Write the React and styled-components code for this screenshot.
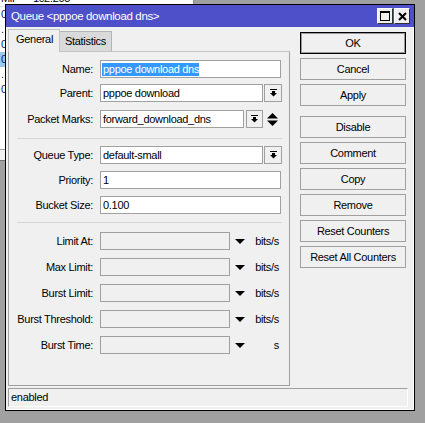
import React from 'react';
import styled, { createGlobalStyle } from 'styled-components';

const GlobalStyle = createGlobalStyle`
    html, body {
        margin: 0;
        padding: 0;
        background: #a0a0a0;
    }
    body {
        font-family: "Liberation Sans", Arial, sans-serif;
        font-size: 11px;
        letter-spacing: -0.3px;
        color: #000;
    }
`

const Desktop = styled.div`
    position: relative;
    width: 425px;
    height: 423px;
    overflow: hidden;
    background: #a0a0a0;
`

// window behind the dialog, only its corner shows
const BackWindow = styled.div`
    position: absolute;
    left: 0;
    top: 0;
    width: 193px;
    height: 161px;
    background: #fff;
    border-right: 1px solid #8a8a8a;
    display: flex;
    flex-direction: column;
`
const BackHeader = styled.div`
    height: 6px;
    overflow: hidden;
    border-bottom: 1px solid #e0e0e0;
    display: flex;
    gap: 14px;
    padding-left: 1px;
    line-height: 1;
    & span { margin-top: -7px; }
`
const BackRow = styled.div`
    height: 15px;
    line-height: 15px;
    padding-left: 1px;
    color: #0a246a;
    background: ${p => (p.$selected ? '#99c9ef' : 'transparent')};
`
const BackFill = styled.div`
    flex: 1;
`
const BackStatus = styled.div`
    height: 10px;
    background: #f0f0f0;
    border-top: 1px solid #a0a0a0;
    border-bottom: 1px solid #707070;
`

const Dialog = styled.div`
    position: absolute;
    left: 5px;
    top: 4px;
    width: 410px;
    height: 407px;
    box-sizing: border-box;
    border: 1px solid #000;
    background: #f0f0f0;
    box-shadow: inset -1px -1px 0 #fff;
    display: flex;
    flex-direction: column;
`
const TitleBar = styled.div`
    height: 22px;
    flex: none;
    background: #4e50c9;
    display: flex;
    align-items: center;
    justify-content: space-between;
    padding: 0 4px 0 5px;
`
const Title = styled.span`
    color: #fff;
    font-size: 11.5px;
    letter-spacing: -0.35px;
`
const TitleButtons = styled.div`
    display: flex;
    gap: 1px;
`
const TitleBtn = styled.div`
    width: 16px;
    height: 16px;
    box-sizing: border-box;
    background: #f0f0f0;
    border: 1px solid;
    border-color: #fff #303030 #303030 #fff;
    display: flex;
    align-items: center;
    justify-content: center;
`

const Content = styled.div`
    display: flex;
    padding: 2px 7px 0 2px;
    gap: 10px;
`
const LeftCol = styled.div`
    width: 282px;
    display: flex;
    flex-direction: column;
`
const TabStrip = styled.div`
    height: 22px;
    display: flex;
    align-items: flex-end;
`
const Tab = styled.div`
    position: relative;
    z-index: 1;
    box-sizing: border-box;
    width: 52px;
    height: ${p => (p.$active ? '23px' : '20px')};
    margin-bottom: ${p => (p.$active ? '-1px' : '0')};
    padding-left: ${p => (p.$active ? '7px' : '5px')};
    background: ${p => (p.$active ? '#f0f0f0' : '#dadada')};
    border: 1px solid ${p => (p.$active ? '#c4c4c4' : '#b4b4b4')};
    border-bottom: none;
    border-left: ${p => (p.$active ? '1px solid #c4c4c4' : 'none')};
    line-height: ${p => (p.$active ? '19px' : '18px')};
`
const Panel = styled.div`
    height: 335px;
    box-sizing: border-box;
    border: 1px solid #a0a0a0;
    border-top-color: #c4c4c4;
    padding-top: 8px;
    display: flex;
    flex-direction: column;
`
const FormRow = styled.div`
    display: flex;
    align-items: center;
    height: 18px;
    margin-top: ${p => p.$gap || 0}px;
`
const Label = styled.div`
    width: 84px;
    flex: none;
    margin-right: 7px;
    text-align: right;
    white-space: nowrap;
`
const Field = styled.div`
    width: ${p => p.$width}px;
    height: 18px;
    flex: none;
    box-sizing: border-box;
    border: 1px solid #a0a0a0;
    background: ${p => (p.$disabled ? '#f0f0f0' : '#fff')};
    padding-left: 1px;
    line-height: 16px;
    white-space: nowrap;
    overflow: hidden;
`
const Selected = styled.span`
    display: inline-block;
    line-height: 13px;
    padding-left: 1px;
    background: #3399ff;
    color: #fff;
`
const FieldText = styled.span`
    padding-left: 1px;
`
const DropBtn = styled.div`
    width: ${p => p.$width || 18}px;
    height: 18px;
    flex: none;
    box-sizing: border-box;
    margin-left: ${p => p.$gap || 1}px;
    border: 1px solid #a0a0a0;
    background: #f0f0f0;
    display: flex;
    align-items: center;
    justify-content: center;
`
const SpinIcon = styled.div`
    margin-left: 4px;
    display: flex;
    align-items: center;
`
const Separator = styled.div`
    border-top: 1px solid #d6d6d6;
    margin: ${p => p.$top}px 7px ${p => p.$bottom}px 8px;
`
const ArrowSlot = styled.div`
    margin-left: 5px;
    display: flex;
    align-items: center;
`
const Unit = styled.div`
    flex: 1;
    text-align: right;
    padding-right: 10px;
`

const ButtonCol = styled.div`
    width: 106px;
    padding-top: 3px;
    display: flex;
    flex-direction: column;
    gap: 4px;
`
const Button = styled.div`
    height: 22px;
    box-sizing: border-box;
    border: 1px solid ${p => (p.$default ? '#000' : '#a0a0a0')};
    box-shadow: ${p => (p.$default ? 'inset 0 0 0 1px #9a9a9a' : 'none')};
    background: #f0f0f0;
    margin-top: ${p => (p.$groupStart ? '6px' : '0')};
    display: flex;
    align-items: center;
    justify-content: center;
    font-size: 11px;
`

const StatusBar = styled.div`
    width: 400px;
    height: 19px;
    box-sizing: border-box;
    margin: 2px 0 0 2px;
    border: 1px solid;
    border-color: #a0a0a0 #fff #fff #a0a0a0;
    padding-left: 2px;
    line-height: 17px;
`

const DropIcon = () => (
    <svg width="9" height="9" viewBox="0 0 9 9">
        <rect x="1" y="0" width="7" height="1" fill="#000" />
        <rect x="3" y="2" width="3" height="2" fill="#000" />
        <polygon points="1,4 8,4 4.5,7.5" fill="#000" />
    </svg>
)

const UpDownIcon = () => (
    <svg width="11" height="13" viewBox="0 0 11 13">
        <polygon points="0,5.5 11,5.5 5.5,0" fill="#000" />
        <polygon points="0,7.5 11,7.5 5.5,13" fill="#000" />
    </svg>
)

const DownArrow = () => (
    <svg width="10" height="5" viewBox="0 0 10 5">
        <polygon points="0,0 10,0 5,5" fill="#000" />
    </svg>
)

const MaxIcon = () => (
    <svg width="10" height="10" viewBox="0 0 10 10">
        <rect x="0.5" y="0.5" width="9" height="9" fill="none" stroke="#000" />
        <rect x="0" y="0" width="10" height="2" fill="#000" />
    </svg>
)

const CloseIcon = () => (
    <svg width="9" height="9" viewBox="0 0 9 9">
        <path d="M1 1 L8 8 M8 1 L1 8" stroke="#000" strokeWidth="2" />
    </svg>
)

const rateRows = [
    { label: 'Limit At:', unit: 'bits/s' },
    { label: 'Max Limit:', unit: 'bits/s' },
    { label: 'Burst Limit:', unit: 'bits/s' },
    { label: 'Burst Threshold:', unit: 'bits/s' },
    { label: 'Burst Time:', unit: 's' },
]

const buttons = [
    { text: 'OK', isDefault: true },
    { text: 'Cancel' },
    { text: 'Apply' },
    { text: 'Disable', groupStart: true },
    { text: 'Comment' },
    { text: 'Copy' },
    { text: 'Remove' },
    { text: 'Reset Counters' },
    { text: 'Reset All Counters' },
]

const backRows = ['0', '.', '0', '0', '.', '0']

const App = () => {
    return (
        <Desktop>
            <GlobalStyle />
            <BackWindow>
                <BackHeader>
                    <span>MiP</span>
                    <span>1c2.205</span>
                </BackHeader>
                {backRows.map((r, i) => (
                    <BackRow key={i} $selected={i === 3}>{r}</BackRow>
                ))}
                <BackFill />
                <BackStatus />
            </BackWindow>

            <Dialog>
                <TitleBar>
                    <Title>Queue &lt;pppoe download dns&gt;</Title>
                    <TitleButtons>
                        <TitleBtn><MaxIcon /></TitleBtn>
                        <TitleBtn><CloseIcon /></TitleBtn>
                    </TitleButtons>
                </TitleBar>

                <Content>
                    <LeftCol>
                        <TabStrip>
                            <Tab $active>General</Tab>
                            <Tab>Statistics</Tab>
                        </TabStrip>
                        <Panel>
                            <FormRow>
                                <Label>Name:</Label>
                                <Field $width={181}><Selected>pppoe download dns</Selected></Field>
                            </FormRow>
                            <FormRow $gap={6}>
                                <Label>Parent:</Label>
                                <Field $width={163}><FieldText>pppoe download</FieldText></Field>
                                <DropBtn><DropIcon /></DropBtn>
                            </FormRow>
                            <FormRow $gap={8}>
                                <Label>Packet Marks:</Label>
                                <Field $width={144}><FieldText>forward_download_dns</FieldText></Field>
                                <DropBtn $width={17} $gap={2}><DropIcon /></DropBtn>
                                <SpinIcon><UpDownIcon /></SpinIcon>
                            </FormRow>
                            <Separator $top={10} $bottom={7} />
                            <FormRow>
                                <Label>Queue Type:</Label>
                                <Field $width={163}><FieldText>default-small</FieldText></Field>
                                <DropBtn><DropIcon /></DropBtn>
                            </FormRow>
                            <FormRow $gap={7}>
                                <Label>Priority:</Label>
                                <Field $width={181}><FieldText>1</FieldText></Field>
                            </FormRow>
                            <FormRow $gap={7}>
                                <Label>Bucket Size:</Label>
                                <Field $width={181}><FieldText>0.100</FieldText></Field>
                            </FormRow>
                            <Separator $top={8} $bottom={9} />
                            {rateRows.map((r, i) => (
                                <FormRow key={r.label} $gap={i === 0 ? 0 : 8}>
                                    <Label>{r.label}</Label>
                                    <Field $width={130} $disabled />
                                    <ArrowSlot><DownArrow /></ArrowSlot>
                                    <Unit>{r.unit}</Unit>
                                </FormRow>
                            ))}
                        </Panel>
                    </LeftCol>

                    <ButtonCol>
                        {buttons.map(b => (
                            <Button key={b.text} $default={b.isDefault} $groupStart={b.groupStart}>
                                {b.text}
                            </Button>
                        ))}
                    </ButtonCol>
                </Content>

                <StatusBar>enabled</StatusBar>
            </Dialog>
        </Desktop>
    );
}

export default App;
